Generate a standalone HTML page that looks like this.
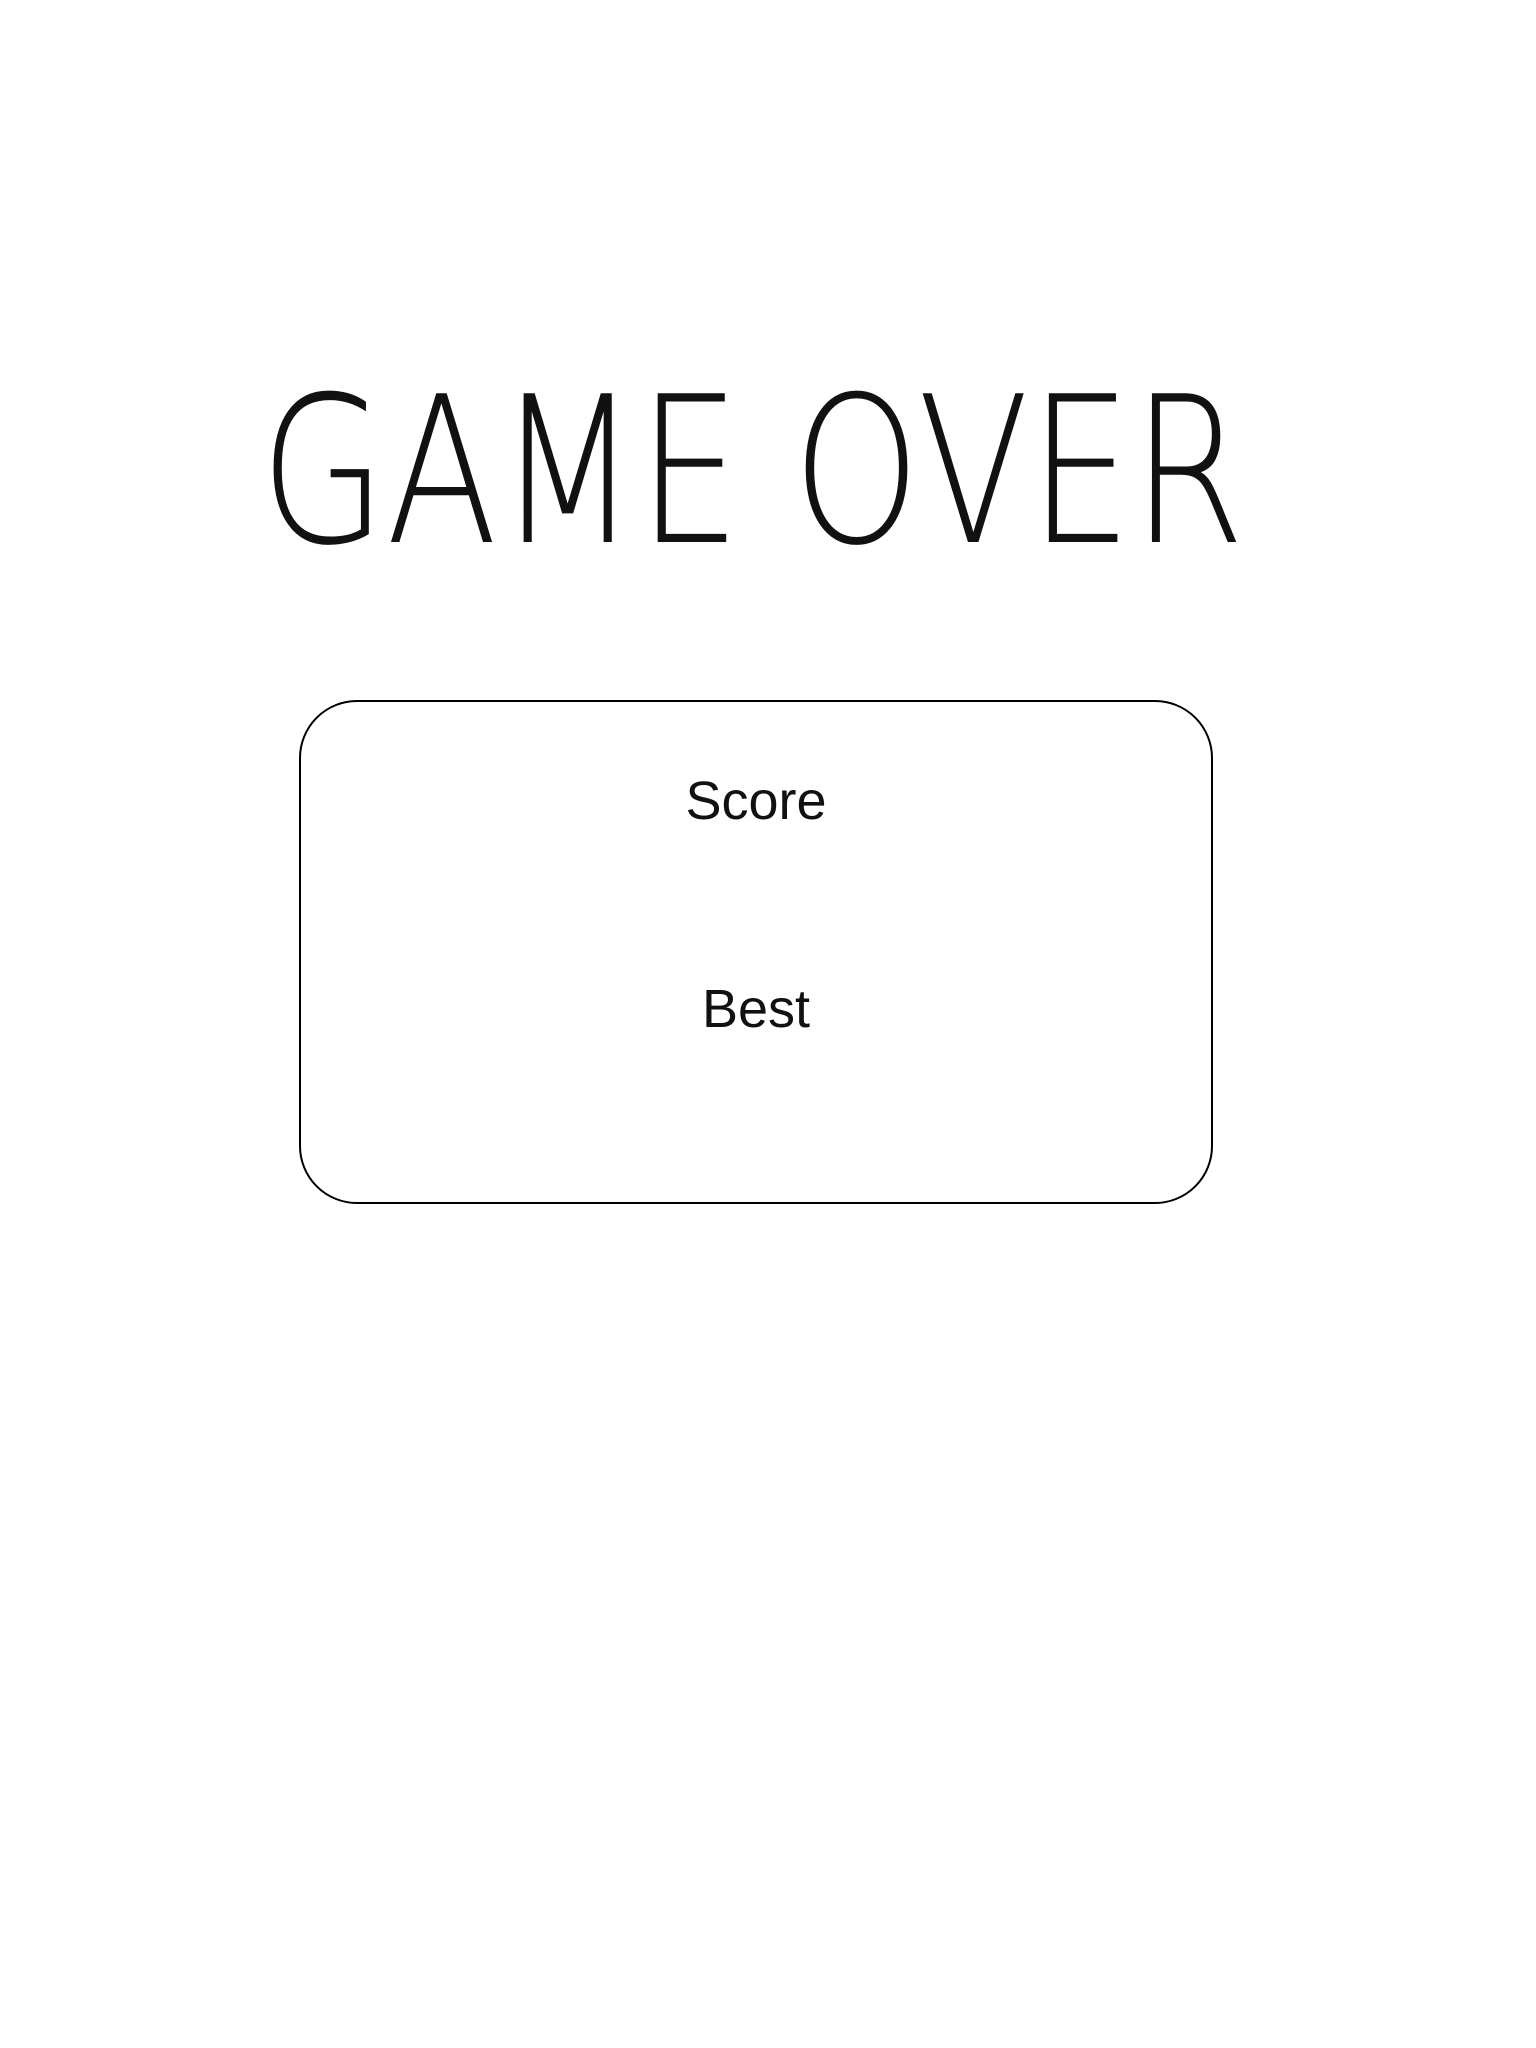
<!DOCTYPE html>
<html><head><meta charset="utf-8"><style>
html,body{margin:0;padding:0;background:#fff;width:1536px;height:2048px;overflow:hidden}
svg{position:absolute;left:0;top:0}
.box{position:absolute;left:299px;top:700px;width:910px;height:500px;border:2px solid #000;border-radius:58px}
.t{position:absolute;left:299px;width:914px;text-align:center;font-family:"Liberation Sans",sans-serif;font-size:54px;color:#111}
</style></head><body>
<svg width="1536" height="600">
<text x="260" y="542" textLength="985" lengthAdjust="spacingAndGlyphs" font-family="DejaVu Sans ExtraLight, DejaVu Sans, sans-serif" font-weight="200" font-size="204" fill="#111">GAME OVER</text>
</svg>
<div class="box"></div>
<div class="t" style="top:770px">Score</div>
<div class="t" style="top:978px">Best</div>
</body></html>
